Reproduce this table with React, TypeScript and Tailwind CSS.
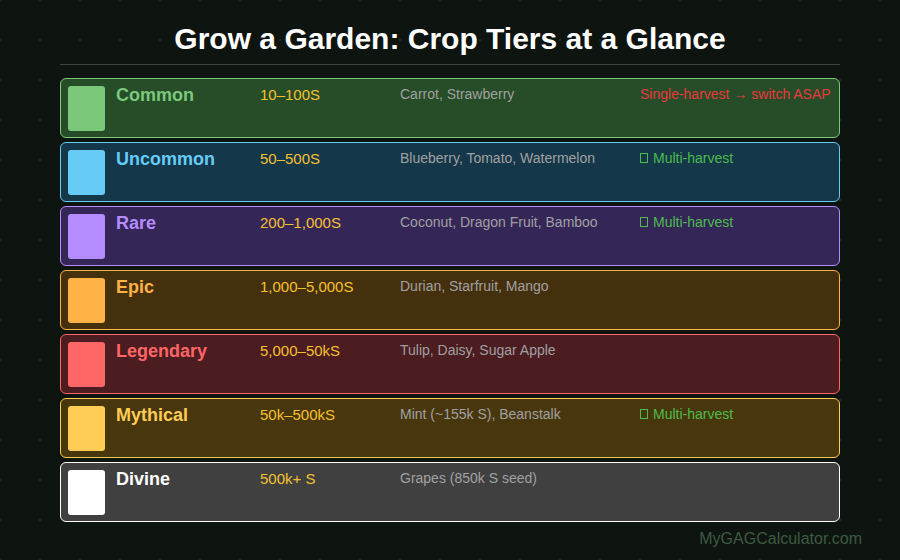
type Tier = {
  name: string;
  price: string;
  crops: string;
  note?: "single" | "multi";
  bg: string;
  border: string;
  icon: string;
  text: string;
};

const tiers: Tier[] = [
  { name: "Common", price: "10–100S", crops: "Carrot, Strawberry", note: "single", bg: "bg-[#264d27]", border: "border-[#7dc97b]", icon: "bg-[#7bc87b]", text: "text-[#7bc87b]" },
  { name: "Uncommon", price: "50–500S", crops: "Blueberry, Tomato, Watermelon", note: "multi", bg: "bg-[#14374a]", border: "border-[#66ccf5]", icon: "bg-[#66ccf5]", text: "text-[#66ccf5]" },
  { name: "Rare", price: "200–1,000S", crops: "Coconut, Dragon Fruit, Bamboo", note: "multi", bg: "bg-[#352658]", border: "border-[#b48cff]", icon: "bg-[#b48cff]", text: "text-[#b48cff]" },
  { name: "Epic", price: "1,000–5,000S", crops: "Durian, Starfruit, Mango", bg: "bg-[#45300d]", border: "border-[#ffb347]", icon: "bg-[#ffb347]", text: "text-[#ffb347]" },
  { name: "Legendary", price: "5,000–50kS", crops: "Tulip, Daisy, Sugar Apple", bg: "bg-[#4b1c20]", border: "border-[#ff6666]", icon: "bg-[#ff6666]", text: "text-[#ff6666]" },
  { name: "Mythical", price: "50k–500kS", crops: "Mint (~155k S), Beanstalk", note: "multi", bg: "bg-[#48370d]", border: "border-[#ffcc55]", icon: "bg-[#ffcc55]", text: "text-[#ffcc55]" },
  { name: "Divine", price: "500k+ S", crops: "Grapes (850k S seed)", bg: "bg-[#404040]", border: "border-white", icon: "bg-white", text: "text-white" },
];

function Note({ kind }: { kind?: Tier["note"] }) {
  if (kind === "single") {
    return <span className="text-[#e8393f]">Single-harvest → switch ASAP</span>;
  }
  if (kind === "multi") {
    return (
      <span className="text-[#4cbb4c]">
        {/* missing-glyph box, as in the original */}
        <span className="inline-block align-baseline w-[8px] h-[10px] border border-[#4cbb4c] mr-[5px]" />
        Multi-harvest
      </span>
    );
  }
  return null;
}

export default function App() {
  return (
    <div
      className="w-[900px] h-[560px] flex flex-col bg-[#0e140f] bg-[radial-gradient(circle,#1f2a22_1px,transparent_1.5px)] bg-[size:40px_40px] bg-[position:20px_20px] text-white overflow-hidden"
      style={{ fontFamily: '"Liberation Sans", Arial, sans-serif' }}
    >
      {/* Title */}
      <h1 className="pt-[23px] text-[30px] leading-[32px] font-bold text-center text-white">
        Grow a Garden: Crop Tiers at a Glance
      </h1>
      <div className="mx-[60px] mt-[9px] h-px bg-[#3b463e]" />

      {/* Tier rows */}
      <div className="mx-[60px] mt-[13px] flex flex-col gap-[4px]">
        {tiers.map((t) => (
          <div
            key={t.name}
            className={`h-[60px] flex items-start pl-[7px] pt-[6px] rounded-[6px] border ${t.bg} ${t.border}`}
          >
            <div className={`w-[37px] h-[45px] mt-px rounded-[3px] flex-shrink-0 ${t.icon}`} />
            <div className={`w-[144px] ml-[11px] text-[18px] leading-[20px] font-bold ${t.text}`}>{t.name}</div>
            <div className="w-[140px] text-[15px] leading-[20px] text-[#f5c030]">{t.price}</div>
            <div className="w-[240px] text-[14px] leading-[18px] text-[#a0a0a0]">{t.crops}</div>
            <div className="text-[14px] leading-[18px]">
              <Note kind={t.note} />
            </div>
          </div>
        ))}
      </div>

      {/* Footer */}
      <div className="mt-[8px] pr-[38px] text-right text-[16px] leading-[18px] text-[#3d5a42]">
        MyGAGCalculator.com
      </div>
    </div>
  );
}
